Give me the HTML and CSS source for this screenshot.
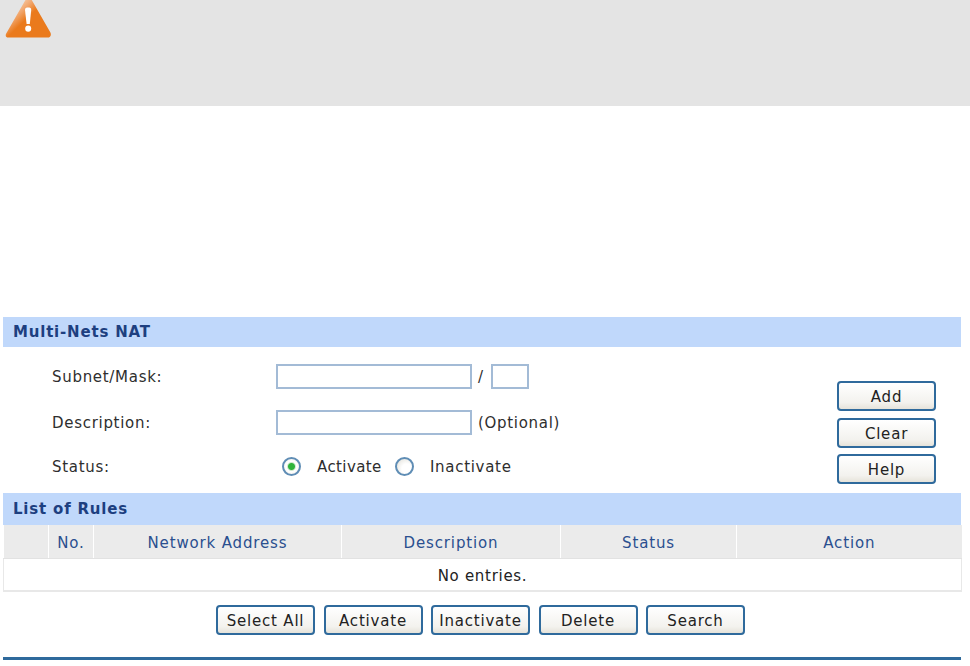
FILE: index.html
```html
<!DOCTYPE html>
<html lang="en">
<head>
<meta charset="utf-8">
<title>Multi-Nets NAT</title>
<link rel="stylesheet" href="styles.css">
</head>
<body>
<div class="notice">
  <svg class="warn" width="56" height="40" viewBox="0 0 56 40" aria-hidden="true">
    <defs>
      <linearGradient id="sheen" x1="0.2" y1="0.1" x2="0.62" y2="0.5">
        <stop offset="0" stop-color="#f8dcc6"/>
        <stop offset="0.5" stop-color="#f1a56a"/>
        <stop offset="0.85" stop-color="#ea7a1c"/>
        <stop offset="1" stop-color="#ea7a1c"/>
      </linearGradient>
    </defs>
    <path d="M28.6 -3 C29.6 -3 30.4 -2.4 31 -1.3 L50.4 32.6 C51.6 34.9 50.4 37.6 47.6 37.6 L8.4 37.6 C6 37.6 5 35.6 6.2 33.4 L26.2 -1.3 C26.8 -2.4 27.6 -3 28.6 -3 Z" fill="url(#sheen)"/>
    <path d="M25 10 C25 7.8 26.4 7.6 28.2 7.6 C30 7.6 31.2 7.8 31.2 10 L29.8 24 L26.6 24 Z" fill="#fff"/>
    <ellipse cx="28.2" cy="28.6" rx="3" ry="3.2" fill="#fff"/>
  </svg>
</div>

<main class="panel">
  <h2 class="bar bar-top">Multi-Nets NAT</h2>
  <div class="config">
    <form class="fields">
      <div class="row row-subnet">
        <label class="label">Subnet/Mask:</label>
        <input class="field field-wide" type="text">
        <span class="after after-slash">/</span>
        <input class="field field-mask" type="text">
      </div>
      <div class="row row-desc">
        <label class="label">Description:</label>
        <input class="field field-wide" type="text">
        <span class="after">(Optional)</span>
      </div>
      <div class="row row-status">
        <span class="label">Status:</span>
        <span class="radio radio-on"></span>
        <span class="radio-text radio-text-on">Activate</span>
        <span class="radio"></span>
        <span class="radio-text">Inactivate</span>
      </div>
    </form>
    <div class="side-actions">
      <button class="btn" type="button">Add</button>
      <button class="btn" type="button">Clear</button>
      <button class="btn" type="button">Help</button>
    </div>
  </div>

  <h2 class="bar bar-list">List of Rules</h2>
  <table class="rules">
    <colgroup>
      <col class="c-check"><col class="c-no"><col class="c-net"><col class="c-desc"><col class="c-status"><col class="c-action">
    </colgroup>
    <thead>
      <tr><th></th><th>No.</th><th>Network Address</th><th>Description</th><th>Status</th><th>Action</th></tr>
    </thead>
    <tbody>
      <tr><td colspan="6">No entries.</td></tr>
    </tbody>
  </table>
  <div class="list-actions">
    <button class="btn" type="button">Select All</button>
    <button class="btn" type="button">Activate</button>
    <button class="btn" type="button">Inactivate</button>
    <button class="btn" type="button">Delete</button>
    <button class="btn" type="button">Search</button>
  </div>
</main>
</body>
</html>
```
FILE: styles.css
```css
* { box-sizing: border-box; }

html, body { margin: 0; padding: 0; background: #fff; }

body {
  width: 970px;
  height: 666px;
  overflow: hidden;
  font-family: "DejaVu Sans", Verdana, sans-serif;
  font-size: 15px;
  letter-spacing: 0.7px;
  color: #2e2e2e;
}

.notice {
  height: 106px;
  background: #e4e4e4;
}

.warn { display: block; overflow: hidden; }

.panel {
  width: 958px;
  height: 343px;
  margin: 211px 0 0 3px;
  border-bottom: 3px solid #2f6a9c;
}

.bar {
  margin: 0;
  background: #c0d8fb;
  color: #1d3f80;
  font-size: 15px;
  font-weight: bold;
  letter-spacing: 0.8px;
  padding-left: 10px;
  display: flex;
  align-items: center;
}

.bar-top { height: 30px; margin-top: 1px; }
.bar-list { height: 32px; }

.config {
  display: flex;
  justify-content: space-between;
  height: 146px;
  padding-right: 25px;
}

.fields { padding: 17px 0 0 49px; }

.row { display: flex; align-items: center; height: 24px; }
.row-desc { margin-top: 22px; }
.row-status { margin-top: 20px; }

.label { width: 224px; padding-top: 2px; }

.field {
  height: 25px;
  border: 2px solid #a3bbd6;
  background: #fff;
  padding: 0;
  margin: 0;
}
.field-wide { width: 196px; }
.field-mask { width: 38px; }

.after { margin-left: 6px; padding-top: 2px; }
.after-slash { width: 13px; }

.radio {
  width: 19px;
  height: 19px;
  margin-left: 5.5px;
  border-radius: 50%;
  border: 2px solid #5f8db5;
  background: radial-gradient(circle at 65% 65%, #ffffff 0 35%, #dfddd5 100%);
  flex: none;
}
.radio-on {
  background: radial-gradient(circle, #2fb33a 0 3px, #cfe9cf 4px, #fff 5px, #f1efe8 100%);
}
.radio-text { margin-left: 16.5px; padding-top: 2px; }
.radio-text-on { width: 66px; letter-spacing: 0.4px; margin-right: 6px; }

.side-actions {
  display: flex;
  flex-direction: column;
  gap: 6.5px;
  padding-top: 34px;
}

.btn {
  width: 99px;
  height: 30px;
  padding: 2px 0 0;
  border: 2px solid #2f6a9c;
  border-radius: 4px;
  background: linear-gradient(#ffffff, #f3f2ee 75%, #e6e3da);
  color: #222;
  font-family: inherit;
  font-size: 15px;
  letter-spacing: 0.8px;
}

.rules {
  width: 100%;
  border-collapse: collapse;
  table-layout: fixed;
}

.c-check { width: 45px; }
.c-no { width: 45px; }
.c-net { width: 248px; }
.c-desc { width: 219px; }
.c-status { width: 176px; }
.c-action { width: 225px; }

.rules th {
  height: 33px;
  background: #ebebeb;
  color: #2a4f8f;
  font-weight: normal;
  letter-spacing: 0.85px;
  border-right: 1px solid #fff;
  border-bottom: 1px solid #e2e2e2;
  padding: 3px 0 0;
}
.rules th:last-child { border-right: 0; }

.rules td {
  height: 33px;
  text-align: center;
  padding: 4px 0 0;
  color: #222;
  border: 1px solid #e8e8e8;
  border-width: 0 1px 2px 1px;
}

.list-actions {
  display: flex;
  gap: 8.5px;
  margin-top: 13px;
  padding-left: 213px;
}
```
